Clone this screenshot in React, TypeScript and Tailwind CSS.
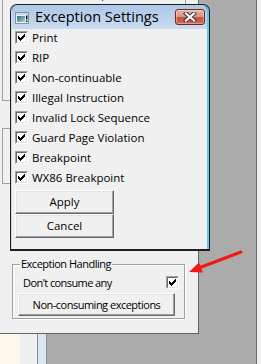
import React from "react";

function Check() {
  return (
    <div className="w-[13px] h-[13px] shrink-0 border border-t-[#a0a0a0] border-l-[#a0a0a0] border-b-white border-r-white">
      <div className="w-full h-full border border-t-[#696969] border-l-[#696969] border-b-[#e3e3e3] border-r-[#e3e3e3] bg-white">
        <svg width="9" height="9" viewBox="0 0 9 9" className="block">
          <rect x="1" y="3" width="1" height="3" fill="#000" />
          <rect x="2" y="4" width="1" height="3" fill="#000" />
          <rect x="3" y="5" width="1" height="3" fill="#000" />
          <rect x="4" y="4" width="1" height="3" fill="#000" />
          <rect x="5" y="3" width="1" height="3" fill="#000" />
          <rect x="6" y="2" width="1" height="3" fill="#000" />
          <rect x="7" y="1" width="1" height="3" fill="#000" />
        </svg>
      </div>
    </div>
  );
}

function ClassicButton({ label, className }: { label: string; className: string }) {
  return (
    <div
      className={
        "flex items-center justify-center bg-[#f0f0f0] border border-t-white border-l-white border-r-[#696969] border-b-[#696969] shadow-[inset_-1px_-1px_0_#a0a0a0,inset_1px_1px_0_#e3e3e3] leading-none text-black whitespace-nowrap " +
        className
      }
    >
      {label}
    </div>
  );
}

const ROWS = [
  "Print",
  "RIP",
  "Non-continuable",
  "Illegal Instruction",
  "Invalid Lock Sequence",
  "Guard Page Violation",
  "Breakpoint",
  "WX86 Breakpoint",
];

function AppIcon() {
  return (
    <svg width="14" height="12" viewBox="0 0 14 12" className="block shrink-0">
      <defs>
        <linearGradient id="ig" x1="0" y1="0" x2="1" y2="1">
          <stop offset="0" stopColor="#2d6f7a" />
          <stop offset="1" stopColor="#a8d4d0" />
        </linearGradient>
      </defs>
      <rect x="0.5" y="0.5" width="13" height="11" fill="#eef2f6" stroke="#8592a0" />
      <rect x="1" y="1" width="12" height="2" fill="#c9d6e4" />
      <rect x="2" y="4" width="8" height="6" fill="url(#ig)" />
      <rect x="11" y="3.5" width="1.5" height="4" fill="#111" />
      <rect x="11" y="8.5" width="1.5" height="1.5" fill="#111" />
    </svg>
  );
}

function CloseButton() {
  return (
    <div className="w-[30px] h-[16px] mt-[4px] rounded-[3px] border border-[#6e2a20] bg-[linear-gradient(#eab3a6,#dc9080_50%,#c6503c_50%,#d06a56)] shadow-[inset_0_0_0_1px_rgba(255,255,255,0.35)] flex items-center justify-center">
      <svg width="14" height="10" viewBox="0 0 14 10" className="block">
        <path d="M3 1.5 L11 8.5 M11 1.5 L3 8.5" stroke="#3b3b3b" strokeWidth="4.2" strokeLinecap="square" />
        <path d="M3 1.5 L11 8.5 M11 1.5 L3 8.5" stroke="#ffffff" strokeWidth="2.2" strokeLinecap="square" />
      </svg>
    </div>
  );
}

export default function App() {
  return (
    <div className="relative w-[261px] h-[364px] overflow-hidden bg-[#ababab] font-['Open_Sans','Noto_Sans',sans-serif] text-black">
      {/* right neighbour window edge */}
      <div className="absolute left-[256px] top-0 w-[5px] h-[364px] border-l border-l-[#6b6b6b] bg-[#f0f0f0]" />

      {/* windows below the main one */}
      <div className="absolute left-0 top-[334px] w-[47px] h-[30px] flex">
        <div className="w-[20px] h-full bg-[#fdf8ec]" />
        <div className="w-[17px] h-full bg-[#f0f0f0]" />
        <div className="w-[10px] h-full bg-[#dbe6f3] border-l border-r border-[#8a8f96]" />
      </div>

      {/* underlying window */}
      <div className="absolute left-0 top-0 w-[199px] h-[334px] bg-[#f0f0f0] border-r border-b border-[#646464] flex flex-col">
        <div className="ml-[2px] mt-[-20px] w-[184px] h-[121px] border border-[#a0a0a0] shrink-0">
          <div className="pt-[5px] pl-[17px] pr-[8px] flex items-center justify-between h-[20px]">
            <span className="text-[10px] leading-[14px] whitespace-nowrap">Consume all exceptions (WX86 on)</span>
          </div>
        </div>
        <div className="ml-[2px] mt-[27px] w-[184px] h-[56px] border border-[#a0a0a0] shrink-0" />

        <div className="relative ml-[12px] mt-[80px] w-[173px] h-[55px] border border-[#a0a0a0] shadow-[inset_1px_1px_0_#ffffff,1px_1px_0_#ffffff] shrink-0 flex flex-col">
          <span className="absolute left-[7px] top-[-9px] px-[1px] bg-[#f0f0f0] text-[11px] leading-[15px] tracking-[-0.5px] whitespace-nowrap">
            Exception Handling
          </span>
          <div className="mt-[11px] h-[13px] pl-[10px] pr-[5px] flex items-center justify-between">
            <span className="text-[11px] leading-[15px] tracking-[-0.6px] whitespace-nowrap">Don't consume any</span>
            <Check />
          </div>
          <ClassicButton label="Non-consuming exceptions" className="ml-[5px] mt-[4px] w-[157px] h-[23px] text-[11px] tracking-[-0.5px]" />
        </div>
      </div>

      {/* Exception Settings dialog */}
      <div className="absolute left-[10px] top-[4px] w-[200px] h-[247px] bg-[#1f1f1f] rounded-t-[7px] pt-[1px] pl-[1px] pr-[1px] pb-[2px] flex">
        <div className="flex-1 flex flex-col rounded-t-[6px] overflow-hidden border-l border-l-[#c6d9ef] border-r-2 border-r-[#63c3ec]">
          <div className="h-[24px] shrink-0 bg-gradient-to-b from-[#adc7e7] to-[#c9dbf0] flex items-start pl-[3px] pr-[2px]">
            <div className="mt-[7px]">
              <AppIcon />
            </div>
            <span className="ml-[6px] mt-[2px] text-[14.5px] leading-[20px] whitespace-nowrap">Exception Settings</span>
            <div className="flex-1" />
            <CloseButton />
          </div>
          <div className="flex-1 bg-[#f0f0f0] pl-[3px] pt-[2px] flex flex-col">
            <div className="flex flex-col gap-[7px]">
              {ROWS.map((r) => (
                <div key={r} className="h-[13px] flex items-center gap-[4px]">
                  <Check />
                  <span className="text-[11.5px] leading-[16px] whitespace-nowrap">{r}</span>
                </div>
              ))}
            </div>
            <ClassicButton label="Apply" className="mt-[6px] w-[99px] h-[24px] text-[11.5px]" />
            <ClassicButton label="Cancel" className="w-[99px] h-[24px] text-[11.5px]" />
          </div>
        </div>
      </div>

      {/* red arrow annotation */}
      <svg className="absolute left-0 top-0" width="261" height="364" viewBox="0 0 261 364">
        <line x1="241" y1="252" x2="200" y2="267.5" stroke="#f21818" strokeWidth="3" strokeLinecap="round" />
        <polygon points="189,272 199,262.5 203,272.5" fill="#f21818" />
      </svg>
    </div>
  );
}
